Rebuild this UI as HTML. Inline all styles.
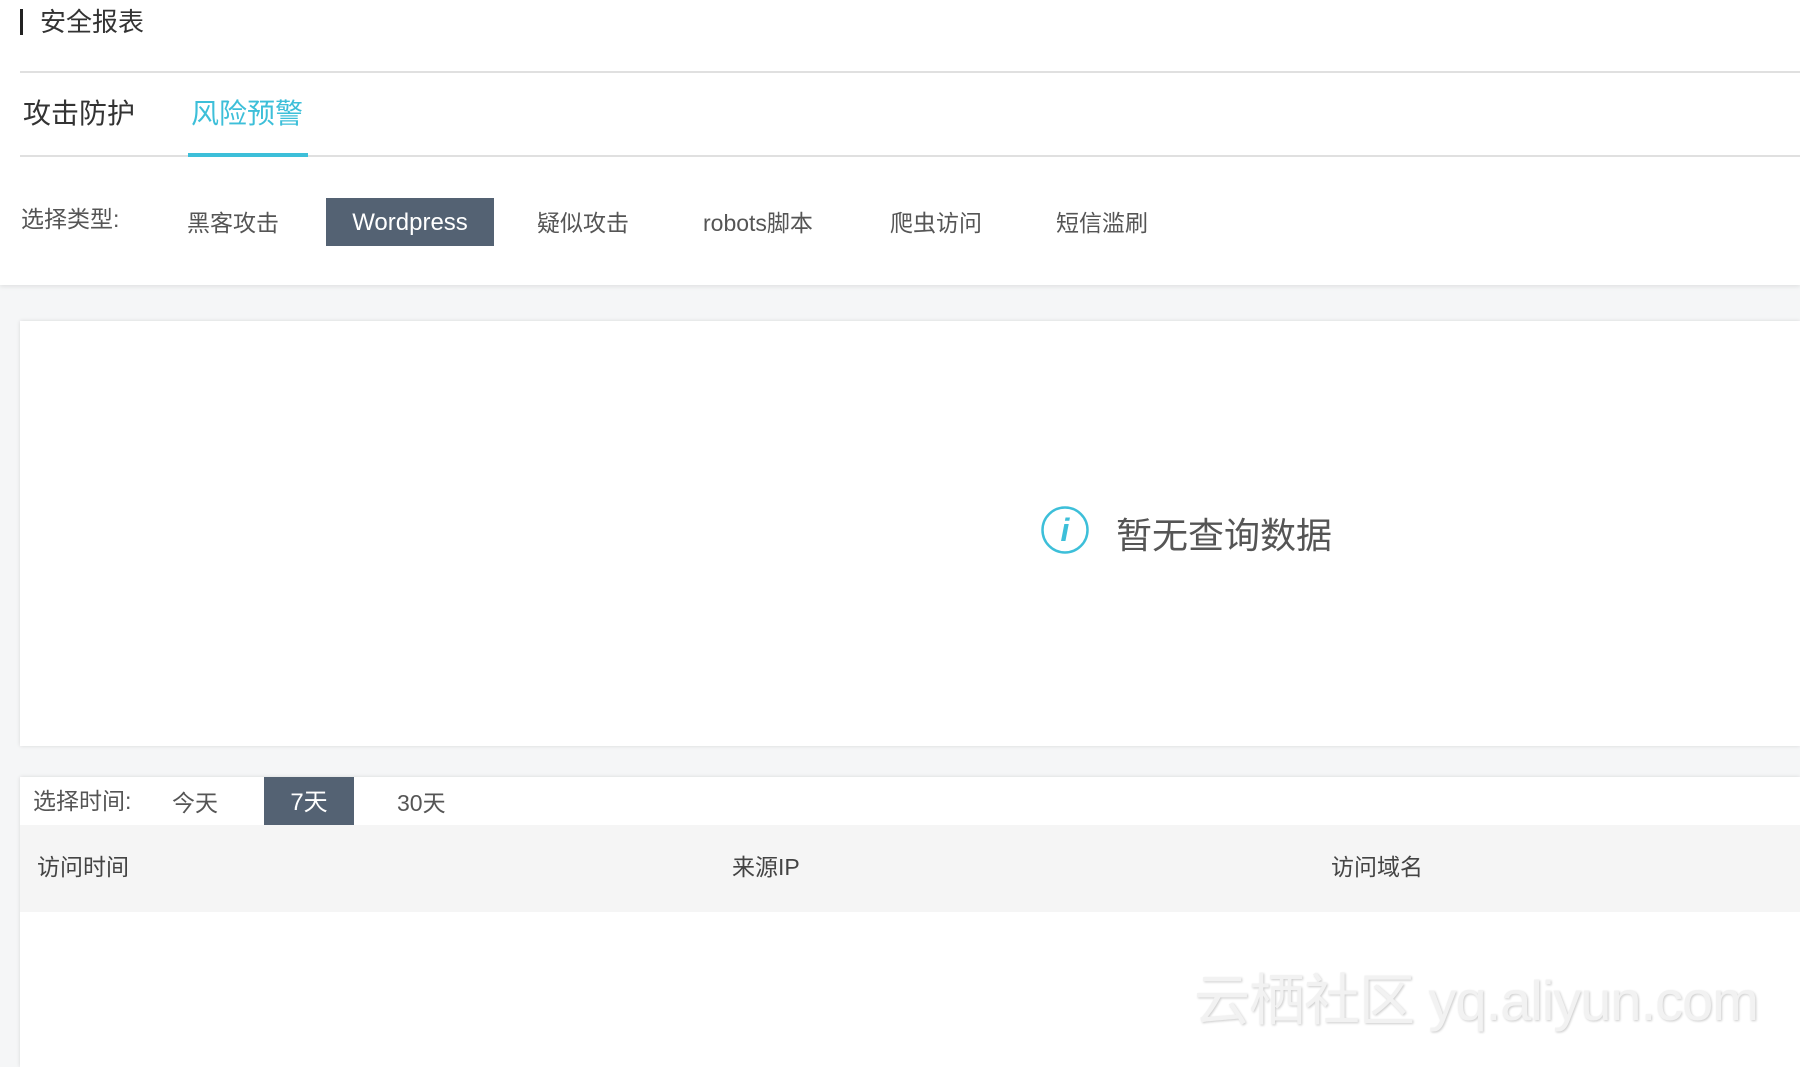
<!DOCTYPE html>
<html><head><meta charset="utf-8"><style>
*{margin:0;padding:0;box-sizing:border-box}
body{width:1800px;height:1048px;overflow:hidden;background:#f5f6f7;font-family:"Liberation Sans","Noto Sans CJK SC",sans-serif;color:#333;position:relative}
.top{position:absolute;left:0;top:0;width:1800px;height:285px;background:#fff;box-shadow:0 2px 4px rgba(0,0,0,.08)}
.a{position:absolute;white-space:nowrap;line-height:1}
.card{position:absolute;left:20px;right:0;background:#fff;box-shadow:0 0 4px rgba(0,0,0,.12)}
</style></head><body>
<div class="top">
  <div style="position:absolute;left:20px;top:9px;width:3px;height:26px;background:#222"></div>
  <div class="a" style="left:40px;top:9px;font-size:26px;color:#333">安全报表</div>
  <div style="position:absolute;left:20px;right:0;top:71px;height:2px;background:#e0e0e0"></div>
  <div class="a" style="left:23px;top:100px;font-size:28px;color:#333">攻击防护</div>
  <div class="a" style="left:191px;top:100px;font-size:28px;color:#3dbfd9">风险预警</div>
  <div style="position:absolute;left:20px;right:0;top:155px;height:2px;background:#e0e0e0"></div>
  <div style="position:absolute;left:188px;width:120px;top:153px;height:4px;background:#3dbfd9"></div>
  <div class="a" style="left:21px;top:208px;font-size:23px;color:#555">选择类型:</div>
  <div class="a" style="left:187px;top:212px;font-size:23px;color:#555">黑客攻击</div>
  <div style="position:absolute;left:326px;top:198px;width:168px;height:48px;background:#546273;color:#fff;font-size:24px;line-height:50px;text-align:center">Wordpress</div>
  <div class="a" style="left:537px;top:212px;font-size:23px;color:#555">疑似攻击</div>
  <div class="a" style="left:703px;top:212px;font-size:23px;color:#555">robots脚本</div>
  <div class="a" style="left:890px;top:212px;font-size:23px;color:#555">爬虫访问</div>
  <div class="a" style="left:1056px;top:212px;font-size:23px;color:#555">短信滥刷</div>
</div>
<div class="card" style="top:321px;height:425px">
  <svg style="position:absolute;left:1020px;top:184px" width="50" height="50" viewBox="0 0 50 50"><circle cx="25" cy="25" r="22.5" fill="none" stroke="#3dbfd9" stroke-width="2.5"/><text x="25" y="36" text-anchor="middle" font-family="Liberation Sans,sans-serif" font-style="italic" font-weight="bold" font-size="32" fill="#3dbfd9">i</text></svg>
  <div class="a" style="left:1096px;top:197px;font-size:36px;color:#555">暂无查询数据</div>
</div>
<div class="card" style="top:777px;height:290px">
  <div class="a" style="left:13px;top:13px;font-size:23px;color:#555">选择时间:</div>
  <div class="a" style="left:152px;top:15px;font-size:23px;color:#555">今天</div>
  <div style="position:absolute;left:244px;top:0;width:90px;height:48px;background:#546273;color:#fff;font-size:24px;line-height:52px;text-align:center">7天</div>
  <div class="a" style="left:377px;top:15px;font-size:23px;color:#555">30天</div>
  <div style="position:absolute;left:0;right:0;top:48px;height:87px;background:#f5f5f5"></div>
  <div class="a" style="left:17px;top:79px;font-size:23px;color:#444">访问时间</div>
  <div class="a" style="left:712px;top:79px;font-size:23px;color:#444">来源IP</div>
  <div class="a" style="left:1311px;top:79px;font-size:23px;color:#444">访问域名</div>
  <div class="a" style="left:1174px;top:196px;font-size:56px;color:#f2f2f2;text-shadow:1px 1px 2px #ccc;letter-spacing:-1px">云栖社区 yq.aliyun.com</div>
</div>
</body></html>
